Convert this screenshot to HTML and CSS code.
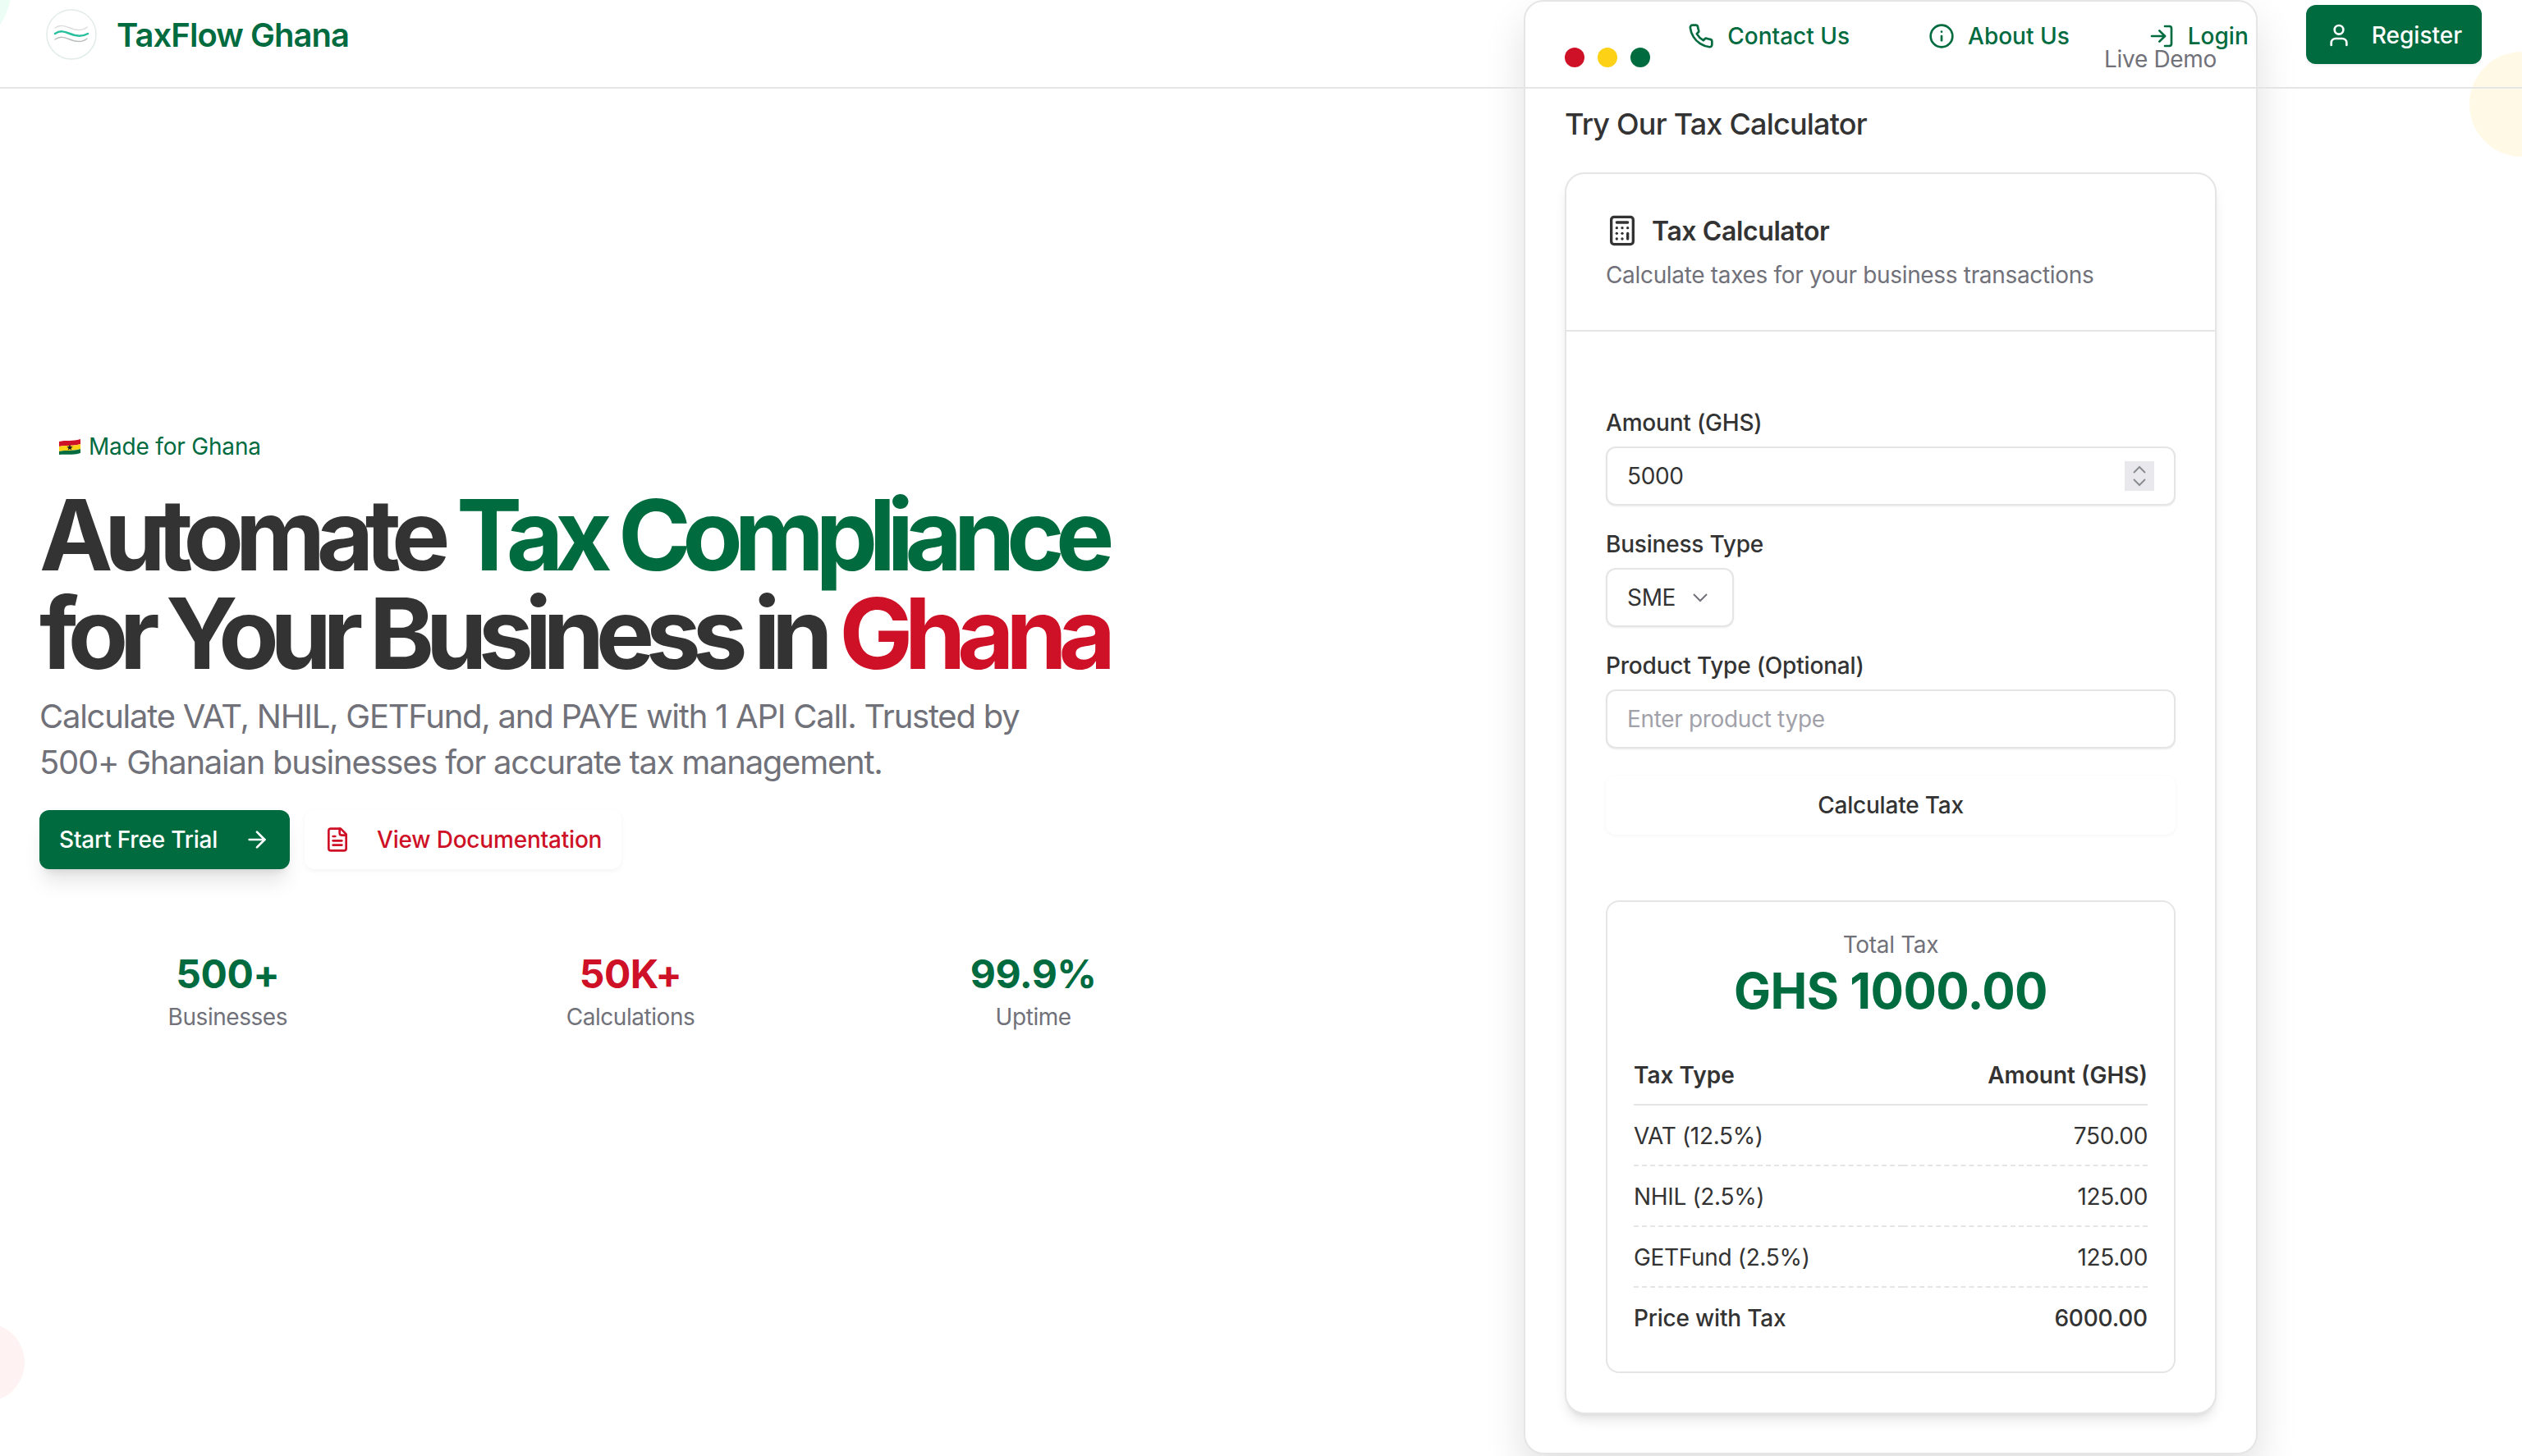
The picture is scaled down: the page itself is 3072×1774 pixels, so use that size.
FILE: index.html
```html
<!DOCTYPE html>
<html lang="en">
<head>
    <meta charset="UTF-8">
    <meta name="viewport" content="width=device-width, initial-scale=1.0">
    <title>TaxFlow Ghana</title>
    <link rel="stylesheet" href="styles.css">
</head>
<body>
    <div class="blob blob-green"></div>
    <div class="blob blob-yellow"></div>
    <div class="blob blob-red"></div>

    <header class="site-header">
        <a href="#" class="brand">
            <span class="brand-logo">
                <svg viewBox="0 0 62 62" width="62" height="62" fill="none" stroke-linecap="round">
                    <circle cx="31" cy="31" r="30" stroke="#e1ecea" stroke-width="1.5"/>
                    <path d="M11 23C17 19 22 20 29 23S44 27 50 22" stroke="#dcdcdc" stroke-width="1.5"/>
                    <path d="M11 30C17 26 22 27 29 30S44 34 51 30" stroke="#27bf9c" stroke-width="2.5"/>
                    <path d="M11 37C17 33 22 34 29 37S44 41 50 36" stroke="#b9bcbc" stroke-width="1.5"/>
                </svg>
            </span>
            <span class="brand-name">TaxFlow Ghana</span>
        </a>
        <nav class="site-nav">
            <a href="#" class="nav-link">
                <svg class="icon" viewBox="0 0 24 24"><path d="M22 16.92v3a2 2 0 0 1-2.18 2 19.79 19.79 0 0 1-8.63-3.07 19.5 19.5 0 0 1-6-6 19.79 19.79 0 0 1-3.07-8.67A2 2 0 0 1 4.11 2h3a2 2 0 0 1 2 1.72 12.84 12.84 0 0 0 .7 2.81 2 2 0 0 1-.45 2.11L8.09 9.91a16 16 0 0 0 6 6l1.27-1.27a2 2 0 0 1 2.11-.45 12.84 12.84 0 0 0 2.81.7A2 2 0 0 1 22 16.92z"/></svg>
                Contact Us
            </a>
            <a href="#" class="nav-link">
                <svg class="icon" viewBox="0 0 24 24"><circle cx="12" cy="12" r="10"/><path d="M12 16v-4"/><path d="M12 8h.01"/></svg>
                About Us
            </a>
            <a href="#" class="nav-link">
                <svg class="icon" viewBox="0 0 24 24"><path d="M15 3h4a2 2 0 0 1 2 2v14a2 2 0 0 1-2 2h-4"/><path d="M10 17l5-5-5-5"/><path d="M15 12H3"/></svg>
                Login
            </a>
            <a href="#" class="btn btn-primary btn-register">
                <svg class="icon" viewBox="0 0 24 24"><path d="M19 21v-2a4 4 0 0 0-4-4H9a4 4 0 0 0-4 4v2"/><circle cx="12" cy="7" r="4"/></svg>
                Register
            </a>
        </nav>
    </header>

    <main class="hero">
        <section class="hero-copy">
            <div class="badge">
                <svg class="flag" viewBox="0 0 26 19" width="26" height="19">
                    <path d="M0 3C8 1 16 3 26 0V6C16 9 8 7 0 9Z" fill="#ce1126"/>
                    <path d="M0 9C8 7 16 9 26 6V12C16 15 8 13 0 15Z" fill="#fcd116"/>
                    <path d="M0 15C8 13 16 15 26 12V17C16 20 8 18 0 19Z" fill="#006b3f"/>
                    <path d="M13 6.5l1 2.6 2.7.1-2.1 1.7.7 2.6-2.3-1.5-2.3 1.5.7-2.6-2.1-1.7 2.7-.1Z" fill="#222"/>
                </svg>
                Made for Ghana
            </div>
            <h1 class="hero-title">
                Automate <span class="text-green">Tax Compliance</span><br>
                for Your Business in <span class="text-red">Ghana</span>
            </h1>
            <p class="hero-text">Calculate VAT, NHIL, GETFund, and PAYE with 1 API Call. Trusted by 500+ Ghanaian businesses for accurate tax management.</p>
            <div class="hero-actions">
                <a href="#" class="btn btn-primary btn-trial">
                    Start Free Trial
                    <svg class="icon" viewBox="0 0 24 24"><path d="M5 12h14"/><path d="M12 5l7 7-7 7"/></svg>
                </a>
                <a href="#" class="btn btn-docs">
                    <svg class="icon" viewBox="0 0 24 24"><path d="M15 2H6a2 2 0 0 0-2 2v16a2 2 0 0 0 2 2h12a2 2 0 0 0 2-2V7Z"/><path d="M14 2v4a2 2 0 0 0 2 2h4"/><path d="M10 9H8"/><path d="M16 13H8"/><path d="M16 17H8"/></svg>
                    View Documentation
                </a>
            </div>
            <div class="stats">
                <div class="stat">
                    <div class="stat-value text-green">500+</div>
                    <div class="stat-label">Businesses</div>
                </div>
                <div class="stat">
                    <div class="stat-value text-red">50K+</div>
                    <div class="stat-label">Calculations</div>
                </div>
                <div class="stat">
                    <div class="stat-value text-green">99.9%</div>
                    <div class="stat-label">Uptime</div>
                </div>
            </div>
        </section>

        <section class="demo-wrap">
            <div class="demo-panel">
                <div class="demo-top">
                    <div class="dots">
                        <span class="dot dot-red"></span>
                        <span class="dot dot-yellow"></span>
                        <span class="dot dot-green"></span>
                    </div>
                    <span class="demo-tag">Live Demo</span>
                </div>
                <h2 class="demo-title">Try Our Tax Calculator</h2>

                <div class="calc-card">
                    <div class="calc-header">
                        <h3 class="calc-title">
                            <svg class="icon icon-calc" viewBox="0 0 24 24"><rect x="4" y="2" width="16" height="20" rx="2"/><path d="M8 6h8"/><path d="M16 14v4"/><path d="M16 10h.01"/><path d="M12 10h.01"/><path d="M8 10h.01"/><path d="M12 14h.01"/><path d="M8 14h.01"/><path d="M12 18h.01"/><path d="M8 18h.01"/></svg>
                            <span class="calc-title-text">Tax Calculator</span>
                        </h3>
                        <p class="calc-sub">Calculate taxes for your business transactions</p>
                    </div>

                    <div class="calc-body">
                        <div class="field">
                            <label class="field-label">Amount (GHS)</label>
                            <div class="input-wrap">
                                <input class="field-input" type="text" value="5000">
                                <span class="spinner">
                                    <svg viewBox="0 0 36 36" width="36" height="36" fill="none" stroke="#8b8b93" stroke-width="2"><path d="M11 14l7-7 7 7"/><path d="M11 22l7 7 7-7"/></svg>
                                </span>
                            </div>
                        </div>
                        <div class="field">
                            <label class="field-label">Business Type</label>
                            <button class="select-box" type="button">
                                SME
                                <svg viewBox="0 0 24 24" width="24" height="24" fill="none" stroke="#71717a" stroke-width="2"><path d="M4 8l8 8 8-8"/></svg>
                            </button>
                        </div>
                        <div class="field">
                            <label class="field-label">Product Type (Optional)</label>
                            <input class="field-input" type="text" placeholder="Enter product type">
                        </div>
                        <button class="btn-calc" type="button">Calculate Tax</button>

                        <div class="result-card">
                            <div class="result-label">Total Tax</div>
                            <div class="result-total">GHS 1000.00</div>
                            <table class="result-table">
                                <thead>
                                    <tr><th>Tax Type</th><th>Amount (GHS)</th></tr>
                                </thead>
                                <tbody>
                                    <tr><td>VAT (12.5%)</td><td>750.00</td></tr>
                                    <tr><td>NHIL (2.5%)</td><td>125.00</td></tr>
                                    <tr><td>GETFund (2.5%)</td><td>125.00</td></tr>
                                    <tr class="row-total"><td>Price with Tax</td><td>6000.00</td></tr>
                                </tbody>
                            </table>
                        </div>
                    </div>
                </div>
            </div>
        </section>
    </main>
</body>
</html>
```

FILE: styles.css
```css
* {
    margin: 0;
    padding: 0;
    box-sizing: border-box;
}

body {
    font-family: Inter, "Noto Sans", sans-serif;
    background: #fff;
    color: #333;
    height: 1774px;
    overflow: hidden;
    position: relative;
    font-size: 28px;
    line-height: 40px;
    letter-spacing: -0.33px;
}

a {
    text-decoration: none;
    color: inherit;
}

.icon {
    width: 32px;
    height: 32px;
    fill: none;
    stroke: currentColor;
    stroke-width: 2;
    stroke-linecap: round;
    stroke-linejoin: round;
    flex-shrink: 0;
}

.text-green { color: #006b3f; }
.text-red { color: #ce1126; }

/* background blobs */
.blob {
    position: absolute;
    border-radius: 50%;
}

.blob-green {
    width: 160px;
    height: 160px;
    left: -146px;
    top: -95px;
    background: #ecfdf5;
}

.blob-yellow {
    width: 128px;
    height: 128px;
    right: -64px;
    top: 63px;
    background: #fff9e6;
}

.blob-red {
    width: 96px;
    height: 96px;
    left: -66px;
    top: 1612px;
    background: #fef2f2;
}

/* header */
.site-header {
    position: absolute;
    top: 0;
    left: 0;
    right: 0;
    height: 108px;
    padding: 6px 49px 0 56px;
    display: flex;
    justify-content: space-between;
    align-items: flex-start;
    border-bottom: 2px solid #e5e5e5;
    z-index: 10;
}

.brand {
    display: flex;
    align-items: center;
    gap: 24px;
    height: 72px;
}

.brand-logo {
    display: flex;
    width: 62px;
    height: 62px;
}

.brand-name {
    font-size: 40px;
    font-weight: 600;
    color: #006b3f;
    letter-spacing: -0.95px;
    padding-top: 1px;
}

.site-nav {
    display: flex;
    align-items: center;
    height: 72px;
    gap: 96px;
    letter-spacing: 0;
}

.nav-link {
    display: flex;
    align-items: center;
    gap: 16px;
    color: #006b3f;
    font-weight: 500;
    padding-top: 4px;
}

.btn {
    display: inline-flex;
    align-items: center;
    height: 72px;
    padding: 0 24px;
    border-radius: 12px;
    font-weight: 500;
    letter-spacing: -0.2px;
}

.btn-primary {
    background: #006b3f;
    color: #fff;
}

.btn-register {
    gap: 24px;
    margin-left: -26px;
    padding-top: 1px;
    letter-spacing: 0;
    box-shadow: 0 2px 4px rgba(0, 0, 0, 0.06);
}

/* hero */
.hero {
    display: grid;
    grid-template-columns: 1fr 1fr;
    gap: 96px;
    padding: 0 48px;
    height: 1774px;
    position: relative;
    align-items: center;
}

.hero-copy {
    padding-top: 9px;
}

.badge {
    display: flex;
    align-items: center;
    gap: 10px;
    padding-left: 24px;
    color: #006b3f;
    letter-spacing: -0.2px;
    margin-bottom: 28px;
}

.hero-title {
    font-size: 120px;
    line-height: 120px;
    font-weight: 700;
    letter-spacing: -10.5px;
    color: #333;
    white-space: nowrap;
}

.hero-text {
    font-size: 40px;
    line-height: 56px;
    color: #71717a;
    letter-spacing: -1.25px;
    max-width: 1240px;
    margin-top: 13px;
}

.hero-actions {
    display: flex;
    gap: 18px;
    margin-top: 30px;
}

.btn-trial {
    gap: 32px;
    box-shadow: 0 20px 25px -5px rgba(0, 0, 0, 0.1), 0 8px 10px -6px rgba(0, 0, 0, 0.1);
}

.btn-docs {
    gap: 32px;
    color: #ce1126;
    background: #fff;
    box-shadow: 0 2px 6px rgba(0, 0, 0, 0.05);
}

.stats {
    display: grid;
    grid-template-columns: repeat(3, 1fr);
    gap: 32px;
    margin-top: 100px;
    text-align: center;
}

.stat-value {
    font-size: 48px;
    line-height: 56px;
    font-weight: 700;
    letter-spacing: -0.5px;
}

.stat-label {
    color: #71717a;
    letter-spacing: -0.45px;
    margin-top: 4px;
}

/* demo panel */
.demo-wrap {
    align-self: start;
}

.demo-panel {
    width: 894px;
    height: 1772px;
    margin-left: 272px;
    padding: 48px 48px 48px;
    background: #fff;
    border: 2px solid #e5e5e5;
    border-radius: 24px;
    box-shadow: 0 25px 50px rgba(0, 0, 0, 0.12);
}

.demo-top {
    display: flex;
    justify-content: space-between;
    align-items: flex-start;
    height: 42px;
    margin-bottom: 39px;
}

.dots {
    display: flex;
    gap: 16px;
    margin-top: 8px;
}

.dot {
    width: 24px;
    height: 24px;
    border-radius: 50%;
}

.dot-red { background: #ce1126; }
.dot-yellow { background: #fcd116; }
.dot-green { background: #006b3f; }

.demo-tag {
    color: #71717a;
    margin-top: 2px;
}

.demo-title {
    font-size: 36px;
    line-height: 40px;
    font-weight: 500;
    letter-spacing: -0.8px;
    margin-bottom: 39px;
}

.calc-card {
    border: 2px solid #e5e5e5;
    border-radius: 24px;
    background: #fff;
    box-shadow: 0 10px 15px -3px rgba(0, 0, 0, 0.1), 0 4px 6px -4px rgba(0, 0, 0, 0.1);
}

.calc-header {
    padding: 48px;
    border-bottom: 2px solid #e5e5e5;
}

.calc-title {
    display: flex;
    align-items: center;
    gap: 16px;
    font-size: 32px;
    line-height: 40px;
    font-weight: 600;
    letter-spacing: -0.4px;
}

.calc-title-text {
    padding-top: 2px;
}

.icon-calc {
    width: 40px;
    height: 40px;
}

.calc-sub {
    margin-top: 12px;
    padding-top: 1px;
    height: 40px;
    color: #71717a;
}

.calc-body {
    padding: 91px 48px 48px;
}

.field {
    margin-bottom: 27px;
}

.field-label {
    display: block;
    font-weight: 500;
    letter-spacing: -0.2px;
    margin-bottom: 9px;
}

.input-wrap {
    position: relative;
}

.field-input,
.select-box {
    height: 72px;
    padding: 0 24px;
    border: 2px solid #e5e5e5;
    border-radius: 12px;
    background: #fff;
    font: inherit;
    letter-spacing: inherit;
    color: #333;
    box-shadow: 0 1px 2px rgba(0, 0, 0, 0.08);
    outline: none;
}

.field-input {
    display: block;
    width: 100%;
}

.field-input::placeholder {
    color: #a1a1aa;
    opacity: 1;
}

.spinner {
    position: absolute;
    right: 26px;
    top: 18px;
    width: 36px;
    height: 36px;
    background: #e9e9ed;
    display: flex;
}

.select-box {
    display: flex;
    align-items: center;
    gap: 18px;
    width: 156px;
}

.btn-calc {
    display: block;
    width: 100%;
    height: 72px;
    margin-top: 33px;
    border: none;
    border-radius: 12px;
    background: #fff;
    font: inherit;
    font-weight: 500;
    letter-spacing: -0.2px;
    color: #333;
    box-shadow: 0 1px 4px rgba(0, 0, 0, 0.05);
}

.result-card {
    margin-top: 80px;
    padding: 32px 32px 30px;
    border: 2px solid #e5e5e5;
    border-radius: 16px;
    text-align: center;
}

.result-label {
    color: #71717a;
}

.result-total {
    font-size: 60px;
    line-height: 60px;
    font-weight: 700;
    letter-spacing: -0.55px;
    color: #006b3f;
    margin-top: 6px;
    margin-bottom: 36px;
}

.result-table {
    width: 100%;
    border-collapse: separate;
    border-spacing: 0;
    text-align: left;
}

.result-table th,
.result-table td {
    padding: 17px 0 15px;
}

.result-table th {
    font-weight: 600;
    letter-spacing: 0;
    border-bottom: 2px solid #e5e5e5;
}

.result-table td {
    font-weight: 400;
    border-bottom: 2px dashed #e5e5e5;
}

.result-table th:last-child,
.result-table td:last-child {
    text-align: right;
}

.result-table .row-total td {
    font-weight: 500;
    letter-spacing: -0.2px;
    border-bottom: none;
}
```
